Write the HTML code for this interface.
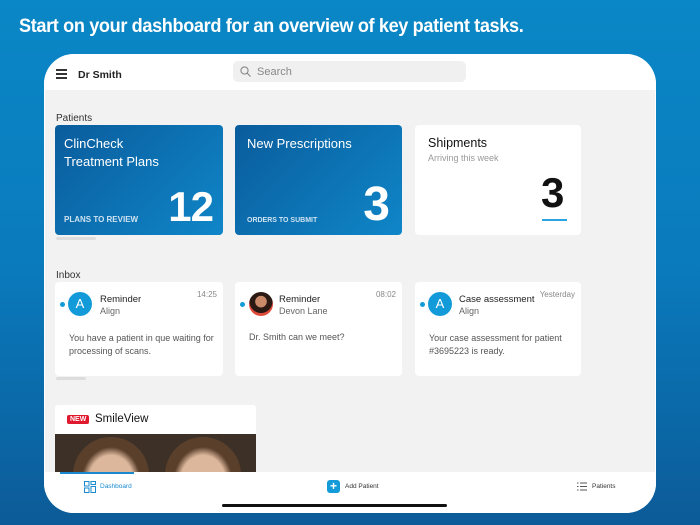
<!DOCTYPE html>
<html><head><style>
*{margin:0;padding:0;box-sizing:border-box}
body{width:700px;height:525px;overflow:hidden;font-family:"Liberation Sans",sans-serif;background:linear-gradient(180deg,#0a87c6 0%,#0a7bbd 50%,#0c5b98 100%);position:relative}
.t{position:absolute;left:19px;top:15px;color:#fff;font-weight:bold;font-size:19.5px;letter-spacing:-0.4px;transform:scaleX(0.93);transform-origin:left}
.frame{position:absolute;left:44px;top:54px;width:612px;height:459px;background:#fff;border-radius:30px;overflow:hidden}
.hdr{position:absolute;left:0;top:0;width:612px;height:36px;background:#fff}
.gray{position:absolute;left:1px;top:36px;width:610px;height:382px;background:#f2f2f2}
.a{position:absolute}
.card{position:absolute;border-radius:4px;background:#fff}
.blue{background:linear-gradient(135deg,#0a5c9c,#0f86c8 100%);color:#fff}
.ic{width:24px;height:24px;border-radius:50%;background:#139bd9;color:#fff;font-size:13px;text-align:center;line-height:24px}
.dot{width:5px;height:5px;border-radius:50%;background:#139bd9}
</style></head><body>
<div class="t">Start on your dashboard for an overview of key patient tasks.</div>
<div class="frame">
 <div class="hdr">
  <div class="a" style="left:12px;top:15px;width:11px;height:1.5px;background:#333;box-shadow:0 4px 0 #333,0 8px 0 #333"></div>
  <div class="a" style="left:34px;top:15px;font-size:10.5px;font-weight:bold;color:#222">Dr Smith</div>
  <div class="a" style="left:189px;top:7px;width:233px;height:21px;background:#f0f0f0;border-radius:5px">
   <svg class="a" style="left:7px;top:5px" width="11" height="11" viewBox="0 0 11 11"><circle cx="4.5" cy="4.5" r="3.6" fill="none" stroke="#888" stroke-width="1.1"/><path d="M7.2 7.2L10.5 10.5" stroke="#888" stroke-width="1.1"/></svg>
   <div class="a" style="left:24px;top:5px;font-size:11px;color:#888">Search</div>
  </div>
 </div>
 <div class="gray"></div>
 <div class="a" style="left:12px;top:59px;font-size:10px;color:#333">Patients</div>
 <div class="card blue" style="left:11px;top:71px;width:168px;height:110px">
  <div class="a" style="left:9px;top:10px;font-size:13px;line-height:18px">ClinCheck<br>Treatment Plans</div>
  <div class="a" style="left:9px;top:90px;font-size:8px;font-weight:bold;color:#cfe3f2">PLANS TO REVIEW</div>
  <div class="a" style="right:10px;top:58px;font-size:42px;font-weight:bold;letter-spacing:-1px">12</div>
 </div>
 <div class="card blue" style="left:191px;top:71px;width:167px;height:110px">
  <div class="a" style="left:12px;top:11px;font-size:13px">New Prescriptions</div>
  <div class="a" style="left:12px;top:92px;font-size:7px;font-weight:bold;color:#cfe3f2">ORDERS TO SUBMIT</div>
  <div class="a" style="right:12px;top:52px;font-size:48px;font-weight:bold">3</div>
 </div>
 <div class="card" style="left:371px;top:71px;width:166px;height:110px">
  <div class="a" style="left:13px;top:11px;font-size:12.5px;color:#111">Shipments</div>
  <div class="a" style="left:13px;top:28px;font-size:9px;color:#999">Arriving this week</div>
  <div class="a" style="left:126px;top:44px;font-size:42px;font-weight:bold;color:#111">3</div>
  <div class="a" style="left:127px;top:94px;width:25px;height:2px;background:#2aa3e0"></div>
 </div>
 <div class="a" style="left:12px;top:183px;width:40px;height:3px;background:#ddd;border-radius:2px"></div>
 <div class="a" style="left:12px;top:216px;font-size:10px;color:#333">Inbox</div>

 <div class="card" style="left:11px;top:228px;width:168px;height:94px">
  <div class="a dot" style="left:5px;top:20px"></div>
  <div class="a ic" style="left:13px;top:10px">A</div>
  <div class="a" style="left:45px;top:12px;font-size:9.5px;color:#222">Reminder</div>
  <div class="a" style="left:45px;top:24px;font-size:9px;color:#666">Align</div>
  <div class="a" style="right:6px;top:8px;font-size:8px;color:#888">14:25</div>
  <div class="a" style="left:14px;top:50px;font-size:9px;line-height:13px;color:#555">You have a patient in que waiting for processing of scans.</div>
 </div>
 <div class="card" style="left:191px;top:228px;width:167px;height:94px">
  <div class="a dot" style="left:5px;top:20px"></div>
  <div class="a" style="left:14px;top:10px;width:24px;height:24px;border-radius:50%;background:radial-gradient(circle at 50% 40%,#c98a6a 0 30%,#2b1a14 32% 60%,#e04a3a 62%)"></div>
  <div class="a" style="left:44px;top:12px;font-size:9.5px;color:#222">Reminder</div>
  <div class="a" style="left:44px;top:24px;font-size:9px;color:#666">Devon Lane</div>
  <div class="a" style="right:6px;top:8px;font-size:8px;color:#888">08:02</div>
  <div class="a" style="left:14px;top:50px;font-size:9px;color:#555">Dr. Smith can we meet?</div>
 </div>
 <div class="card" style="left:371px;top:228px;width:166px;height:94px">
  <div class="a dot" style="left:5px;top:20px"></div>
  <div class="a ic" style="left:13px;top:10px">A</div>
  <div class="a" style="left:44px;top:12px;font-size:9.5px;color:#222">Case assessment</div>
  <div class="a" style="left:44px;top:24px;font-size:9px;color:#666">Align</div>
  <div class="a" style="right:6px;top:8px;font-size:8px;color:#888">Yesterday</div>
  <div class="a" style="left:14px;top:50px;width:150px;font-size:9px;line-height:13px;color:#555">Your case assessment for patient #3695223 is ready.</div>
 </div>
 <div class="a" style="left:12px;top:323px;width:30px;height:3px;background:#ddd;border-radius:2px"></div>

 <div class="card" style="left:11px;top:351px;width:201px;height:70px;border-radius:3px 3px 0 0;overflow:hidden">
  <div class="a" style="left:12px;top:10px;background:#e0182d;color:#fff;font-size:7px;font-weight:bold;padding:1px 3px;border-radius:2px">NEW</div>
  <div class="a" style="left:40px;top:8px;font-size:11.5px;color:#111">SmileView</div>
  <div class="a" style="left:0;top:29px;width:201px;height:40px;background:#3d3026">
   <div class="a" style="left:18px;top:3px;width:76px;height:60px;border-radius:38px 38px 0 0;background:radial-gradient(ellipse at 50% 75%,#dcb79c 0 42%,#5a3f2b 55%)"></div>
   <div class="a" style="left:110px;top:3px;width:76px;height:60px;border-radius:38px 38px 0 0;background:radial-gradient(ellipse at 50% 75%,#dcb79c 0 42%,#5a3f2b 55%)"></div>
  </div>
 </div>

 <div class="a" style="left:0;top:418px;width:612px;height:41px;background:#fff">
  <div class="a" style="left:16px;top:0;width:74px;height:2px;background:#1a8ad0"></div>
  <svg class="a" style="left:40px;top:9px" width="12" height="12" viewBox="0 0 12 12" fill="none" stroke="#1a8ad0" stroke-width="1"><rect x="0.5" y="0.5" width="4.5" height="4.5"/><rect x="7" y="0.5" width="4.5" height="3"/><rect x="0.5" y="7" width="4.5" height="4.5"/><rect x="7" y="5.5" width="4.5" height="6"/></svg>
  <div class="a" style="left:56px;top:11px;font-size:6.5px;color:#1a8ad0">Dashboard</div>
  <div class="a" style="left:283px;top:8px;width:13px;height:13px;border-radius:3px;background:#139bd9;color:#fff;font-size:12px;line-height:13px;text-align:center;font-weight:bold">+</div>
  <div class="a" style="left:301px;top:11px;font-size:6.5px;color:#333">Add Patient</div>
  <svg class="a" style="left:533px;top:10px" width="10" height="9" viewBox="0 0 10 9" stroke="#555" stroke-width="1"><path d="M0 1h1.5M3 1h7M0 4.5h1.5M3 4.5h7M0 8h1.5M3 8h7"/></svg>
  <div class="a" style="left:548px;top:11px;font-size:6.5px;color:#333">Patients</div>
  <div class="a" style="left:178px;top:32px;width:225px;height:3px;background:#111;border-radius:2px"></div>
 </div>
</div>
</body></html>
